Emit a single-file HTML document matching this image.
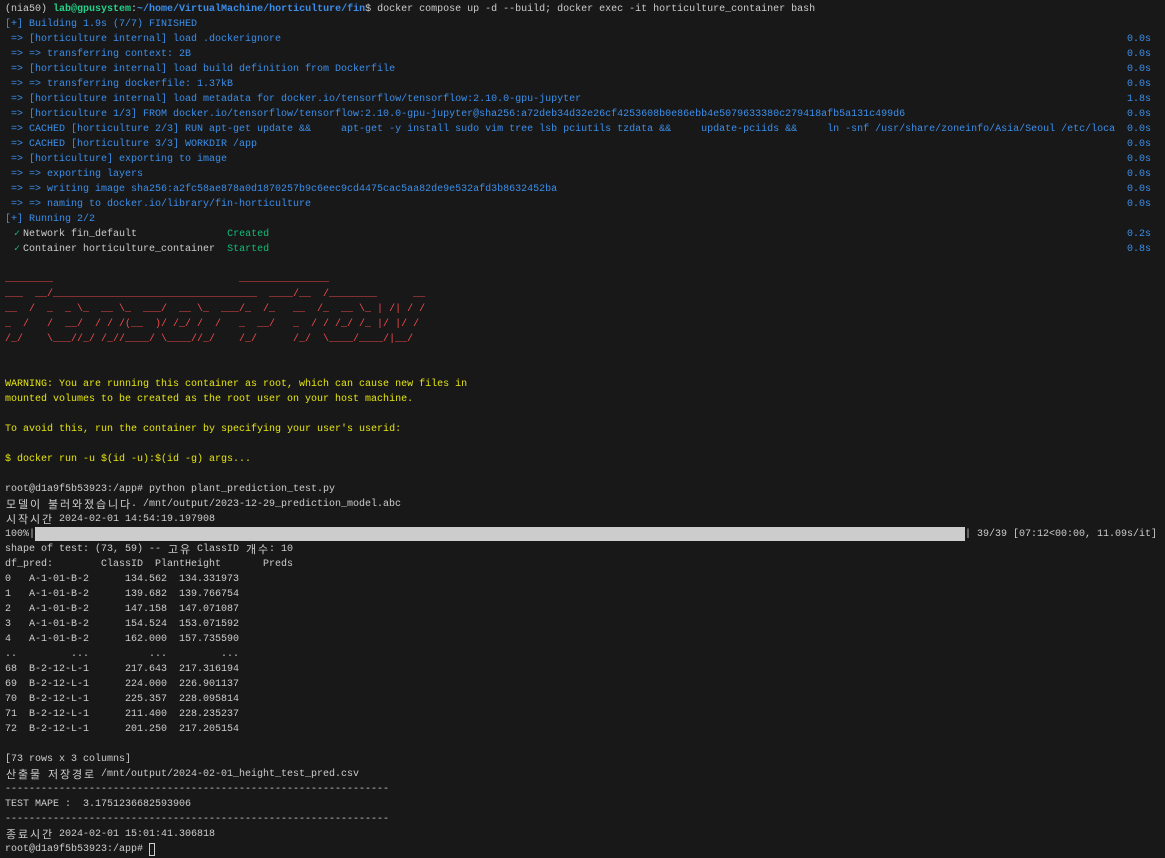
<!DOCTYPE html>
<html><head><meta charset="utf-8"><style>
html,body{margin:0;padding:0;background:#181818;width:1165px;height:858px;overflow:hidden}
pre{position:absolute;left:5px;top:2px;margin:0;font-family:"Liberation Mono",monospace;font-size:10px;line-height:15px;color:#cccccc;white-space:pre}
.b{color:#3b8eea}.g{color:#23d18b;font-weight:bold}.p{color:#3b8eea;font-weight:bold}
.y{color:#e5e510}.r{color:#f14c4c}.c{color:#0dbc79}
.k{display:inline-block;width:12px;height:15px;overflow:hidden;text-align:center;font-family:"Noto Sans CJK KR",sans-serif;font-size:11px;line-height:15px;vertical-align:top}
.ck{display:inline-block;width:12px;height:15px;overflow:hidden;text-align:center;vertical-align:top;color:#0dbc79}
.t{position:absolute;right:14px;font-family:"Liberation Mono",monospace;font-size:10px;line-height:15px;color:#3b8eea}
.bar{display:inline-block;width:930px;height:14px;background:#cccccc;vertical-align:top}
.cur{display:inline-block;width:6px;height:13px;border:1px solid #cccccc;box-sizing:border-box;vertical-align:top;margin-top:1px}
</style></head><body>
<pre>(nia50) <span class="g">lab@gpusystem</span>:<span class="p">~/home/VirtualMachine/horticulture/fin</span>$ docker compose up -d --build; docker exec -it horticulture_container bash
<span class="b">[+] Building 1.9s (7/7) FINISHED
 =&gt; [horticulture internal] load .dockerignore
 =&gt; =&gt; transferring context: 2B
 =&gt; [horticulture internal] load build definition from Dockerfile
 =&gt; =&gt; transferring dockerfile: 1.37kB
 =&gt; [horticulture internal] load metadata for docker.io/tensorflow/tensorflow:2.10.0-gpu-jupyter
 =&gt; [horticulture 1/3] FROM docker.io/tensorflow/tensorflow:2.10.0-gpu-jupyter@sha256:a72deb34d32e26cf4253608b0e86ebb4e5079633380c279418afb5a131c499d6
 =&gt; CACHED [horticulture 2/3] RUN apt-get update &amp;&amp;     apt-get -y install sudo vim tree lsb pciutils tzdata &amp;&amp;     update-pciids &amp;&amp;     ln -snf /usr/share/zoneinfo/Asia/Seoul /etc/loca
 =&gt; CACHED [horticulture 3/3] WORKDIR /app
 =&gt; [horticulture] exporting to image
 =&gt; =&gt; exporting layers
 =&gt; =&gt; writing image sha256:a2fc58ae878a0d1870257b9c6eec9cd4475cac5aa82de9e532afd3b8632452ba
 =&gt; =&gt; naming to docker.io/library/fin-horticulture
[+] Running 2/2</span>
 <span class="ck">✓</span>Network fin_default               <span class="c">Created</span>
 <span class="ck">✓</span>Container horticulture_container  <span class="c">Started</span>

<span class="r">________                               _______________
___  __/__________________________________  ____/__  /________      __
__  /  _  _ \_  __ \_  ___/  __ \_  ___/_  /_   __  /_  __ \_ | /| / /
_  /   /  __/  / / /(__  )/ /_/ /  /   _  __/   _  / / /_/ /_ |/ |/ /
/_/    \___//_/ /_//____/ \____//_/    /_/      /_/  \____/____/|__/</span>


<span class="y">WARNING: You are running this container as root, which can cause new files in
mounted volumes to be created as the root user on your host machine.

To avoid this, run the container by specifying your user's userid:

$ docker run -u $(id -u):$(id -g) args...</span>

root@d1a9f5b53923:/app# python plant_prediction_test.py
<span class="k">모</span><span class="k">델</span><span class="k">이</span> <span class="k">불</span><span class="k">러</span><span class="k">와</span><span class="k">졌</span><span class="k">습</span><span class="k">니</span><span class="k">다</span>. /mnt/output/2023-12-29_prediction_model.abc
<span class="k">시</span><span class="k">작</span><span class="k">시</span><span class="k">간</span> 2024-02-01 14:54:19.197908
100%|<span class="bar"></span>| 39/39 [07:12&lt;00:00, 11.09s/it]
shape of test: (73, 59) -- <span class="k">고</span><span class="k">유</span> ClassID <span class="k">개</span><span class="k">수</span>: 10
df_pred:        ClassID  PlantHeight       Preds
0   A-1-01-B-2      134.562  134.331973
1   A-1-01-B-2      139.682  139.766754
2   A-1-01-B-2      147.158  147.071087
3   A-1-01-B-2      154.524  153.071592
4   A-1-01-B-2      162.000  157.735590
..         ...          ...         ...
68  B-2-12-L-1      217.643  217.316194
69  B-2-12-L-1      224.000  226.901137
70  B-2-12-L-1      225.357  228.095814
71  B-2-12-L-1      211.400  228.235237
72  B-2-12-L-1      201.250  217.205154

[73 rows x 3 columns]
<span class="k">산</span><span class="k">출</span><span class="k">물</span> <span class="k">저</span><span class="k">장</span><span class="k">경</span><span class="k">로</span> /mnt/output/2024-02-01_height_test_pred.csv
----------------------------------------------------------------
TEST MAPE :  3.1751236682593906
----------------------------------------------------------------
<span class="k">종</span><span class="k">료</span><span class="k">시</span><span class="k">간</span> 2024-02-01 15:01:41.306818
root@d1a9f5b53923:/app# <span class="cur"></span></pre>
<div class="t" style="top:32px">0.0s</div>
<div class="t" style="top:47px">0.0s</div>
<div class="t" style="top:62px">0.0s</div>
<div class="t" style="top:77px">0.0s</div>
<div class="t" style="top:92px">1.8s</div>
<div class="t" style="top:107px">0.0s</div>
<div class="t" style="top:122px">0.0s</div>
<div class="t" style="top:137px">0.0s</div>
<div class="t" style="top:152px">0.0s</div>
<div class="t" style="top:167px">0.0s</div>
<div class="t" style="top:182px">0.0s</div>
<div class="t" style="top:197px">0.0s</div>
<div class="t" style="top:227px">0.2s</div>
<div class="t" style="top:242px">0.8s</div>
</body></html>
